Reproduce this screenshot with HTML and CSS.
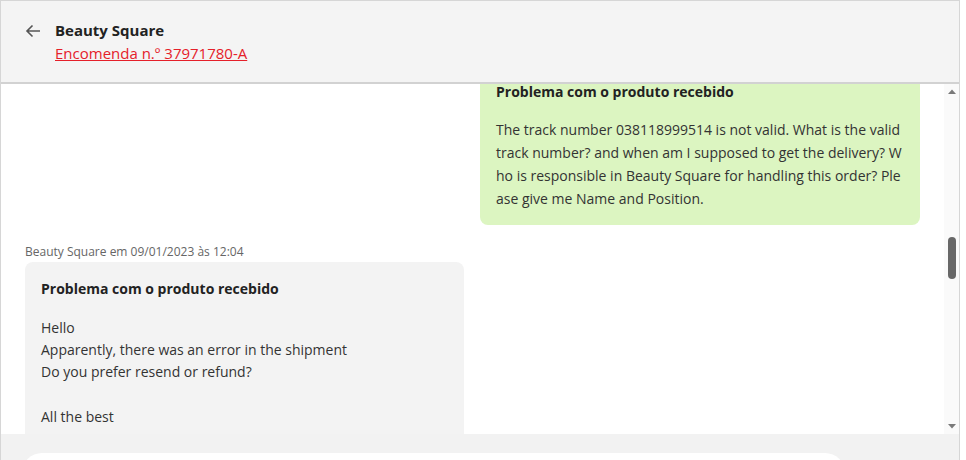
FILE: index.html
```html
<!DOCTYPE html>
<html lang="pt">
<head>
<meta charset="utf-8">
<title>Beauty Square</title>
<link rel="stylesheet" href="styles.css">
</head>
<body>
<div class="panel">
  <header class="header">
    <svg class="back" width="16" height="14" viewBox="0 0 16 14"><path d="M15 7H2M7.5 1.5L2 7l5.5 5.5" fill="none" stroke="#555" stroke-width="1.6"/></svg>
    <div class="head-text">
      <div class="shop">Beauty Square</div>
      <a class="order" href="#">Encomenda n.º 37971780-A</a>
    </div>
  </header>
  <div class="content">
    <main class="scroll" id="scroll">
      <div class="thread">
        <div class="msg mine" id="anchor">
          <div class="bubble green">
            <div class="title">Problema com o produto recebido</div>
            <div class="body">The track number 038118999514 is not valid. What is the valid track number? and when am I supposed to get the delivery? Who is responsible in Beauty Square for handling this order? Please give me Name and Position.</div>
          </div>
        </div>
        <div class="msg">
          <div class="meta">Beauty Square em 09/01/2023 às 12:04</div>
          <div class="bubble grey">
            <div class="title gtitle">Problema com o produto recebido</div>
            <div class="body gbody">Hello<br>Apparently, there was an error in the shipment<br>Do you prefer resend or refund?<br><br>All the best</div>
          </div>
        </div>
      </div>
    </main>
    <div class="scrollbar">
      <div class="arrow"><svg width="8" height="5" viewBox="0 0 8 5"><path d="M0 5L4 0.5L8 5Z" fill="#7a7a7a"/></svg></div>
      <div class="track"><div class="thumb" style="margin-top: 138px"></div></div>
      <div class="arrow"><svg width="8" height="5" viewBox="0 0 8 5"><path d="M0 0L4 4.5L8 0Z" fill="#7a7a7a"/></svg></div>
    </div>
  </div>
  <footer class="footer">
    <div class="composer">
      <div class="input"></div>
    </div>
  </footer>
</div>
<script src="script.js"></script>
</body>
</html>
```

FILE: styles.css
```css
html, body {
  margin: 0;
  padding: 0;
  background: #ffffff;
  overflow: hidden;
}
body {
  font-family: "Open Sans", "Liberation Sans", sans-serif;
  color: #333333;
}
.panel {
  width: 960px;
  height: 540px;
  box-sizing: border-box;
  border: 1px solid #d6d6d6;
  display: flex;
  flex-direction: column;
}
.header {
  flex: 0 0 auto;
  background: #f4f4f4;
  border-bottom: 2px solid #d2d2d2;
  display: flex;
  align-items: flex-start;
  padding: 18px 24px 0 24px;
  height: 63px;
}
.back {
  margin-top: 5px;
  margin-right: 14px;
  flex: 0 0 auto;
}
.head-text {
  display: flex;
  flex-direction: column;
}
.shop {
  font-size: 15px;
  font-weight: 700;
  line-height: 22px;
  color: #222222;
}
.order {
  font-size: 15px;
  line-height: 25px;
  color: #e5202a;
  text-decoration: underline;
}
.content {
  flex: 0 0 auto;
  height: 350px;
  display: flex;
}
.scroll {
  flex: 1 1 auto;
  overflow: hidden;
  background: #ffffff;
}
.thread {
  display: flex;
  flex-direction: column;
  gap: 19px;
  padding: 0 24px 24px 24px;
}
.msg {
  display: flex;
  flex-direction: column;
  align-items: flex-start;
}
.msg.mine {
  align-items: flex-end;
}
.meta {
  font-size: 12px;
  line-height: 16px;
  color: #666666;
  margin-bottom: 2px;
}
.bubble {
  box-sizing: border-box;
  border-radius: 8px;
  padding: 17px 16px 15px 16px;
}
.green {
  background: #dcf5c1;
  width: 440px;
  padding-top: 16px;
}
.grey {
  background: #f3f3f3;
  width: 439px;
}
.title {
  font-size: 14px;
  font-weight: 700;
  line-height: 20px;
  color: #222222;
  margin-bottom: 16px;
}
.gtitle {
  margin-bottom: 18px;
}
.body {
  font-size: 14px;
  line-height: 23px;
  color: #333333;
  word-break: break-all;
}
.gbody {
  line-height: 22.2px;
  word-break: normal;
}
.scrollbar {
  flex: 0 0 15px;
  width: 15px;
  background: #fafafa;
  display: flex;
  flex-direction: column;
}
.arrow {
  height: 15px;
  display: flex;
  align-items: center;
  justify-content: center;
}
.track {
  flex: 1 1 auto;
  display: flex;
  flex-direction: column;
  align-items: center;
}
.thumb {
  width: 8px;
  height: 42px;
  border-radius: 4px;
  background: #686868;
}
.footer {
  flex: 1 1 auto;
  background: #f2f2f2;
  padding: 19px 24px 0 21px;
}
.composer {
  display: flex;
  gap: 16px;
  align-items: flex-start;
}
.input {
  width: 823px;
  height: 48px;
  background: #ffffff;
  border-radius: 20px;
}
```

FILE: script.js
```js
var s = document.getElementById('scroll');
var a = document.querySelector('#anchor .bubble');
s.scrollTop += a.getBoundingClientRect().top - 66;
```
